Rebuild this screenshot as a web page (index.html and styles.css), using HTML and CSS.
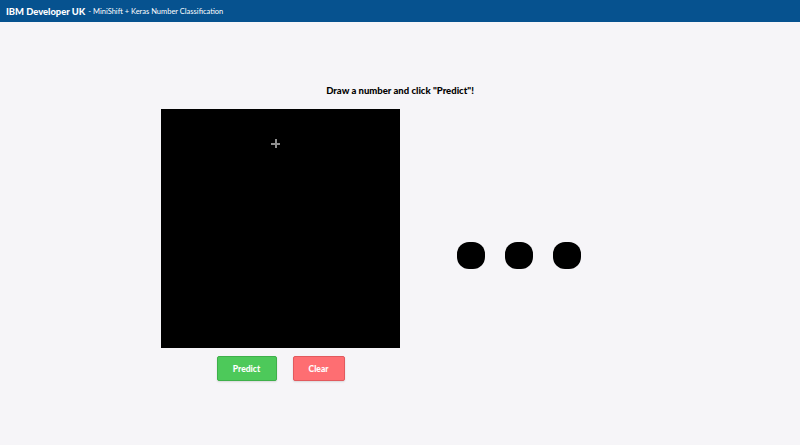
FILE: index.html
```html
<!DOCTYPE html>
<html lang="en">
<head>
<meta charset="utf-8">
<title>IBM Developer UK - MiniShift + Keras Number Classification</title>
<link rel="stylesheet" href="styles.css">
</head>
<body>
<header class="topbar">
  <span class="brand">IBM Developer UK</span>
  <span class="subtitle">- MiniShift + Keras Number Classification</span>
</header>
<main class="main">
  <h1 class="prompt">Draw a number and click "Predict"!</h1>
  <div class="workspace">
    <div class="draw-col">
      <div class="canvas">
        <span class="cursor"></span>
      </div>
      <div class="actions">
        <button class="btn btn-predict">Predict</button>
        <button class="btn btn-clear">Clear</button>
      </div>
    </div>
    <div class="result">
      <span class="dot"></span>
      <span class="dot"></span>
      <span class="dot"></span>
    </div>
  </div>
</main>
</body>
</html>
```

FILE: styles.css
```css
html, body {
  margin: 0;
  padding: 0;
}
body {
  background: #f6f5f8;
  font-family: Lato, "Open Sans", "Liberation Sans", sans-serif;
  color: #000;
  width: 800px;
  height: 445px;
  overflow: hidden;
}
.topbar {
  height: 22px;
  background: #06528f;
  color: #fff;
  display: flex;
  align-items: center;
  padding-left: 6px;
  gap: 3px;
  box-sizing: border-box;
}
.brand {
  font-size: 9.4px;
  font-weight: 900;
}
.subtitle {
  font-size: 7.5px;
}
.main {
  padding-top: 62px;
}
.prompt {
  margin: 0;
  font-size: 9.5px;
  font-weight: 900;
  text-align: center;
  line-height: 14px;
}
.workspace {
  margin-top: 11px;
  display: flex;
  padding-left: 161px;
}
.draw-col {
  width: 239px;
  display: flex;
  flex-direction: column;
  align-items: center;
}
.canvas {
  position: relative;
  width: 239px;
  height: 239px;
  background: #000;
}
.cursor {
  position: absolute;
  left: 110px;
  top: 30px;
  width: 9px;
  height: 9px;
}
.cursor::before,
.cursor::after {
  content: "";
  position: absolute;
  background: #8f8f8f;
}
.cursor::before {
  left: 3.5px;
  top: 0;
  width: 2px;
  height: 9px;
}
.cursor::after {
  left: 0;
  top: 3.5px;
  width: 9px;
  height: 2px;
}
.actions {
  margin-top: 8px;
  display: flex;
  gap: 16px;
}
.btn {
  height: 25px;
  border-radius: 2px;
  color: #fff;
  font-family: Lato, "Open Sans", "Liberation Sans", sans-serif;
  font-size: 8.5px;
  font-weight: 900;
  padding: 0;
  cursor: pointer;
  box-shadow: 0 1px 2px rgba(0, 0, 0, 0.12);
}
.btn-predict {
  width: 60px;
  background: #4dc95a;
  border: 1px solid #3fb04b;
}
.btn-clear {
  width: 52px;
  background: #fe6e72;
  border: 1px solid #e25a5e;
}
.result {
  margin-left: 57px;
  margin-top: 133px;
  display: flex;
  gap: 20px;
  align-self: flex-start;
}
.dot {
  width: 28px;
  height: 27px;
  background: #000;
  border-radius: 12px;
}
```
